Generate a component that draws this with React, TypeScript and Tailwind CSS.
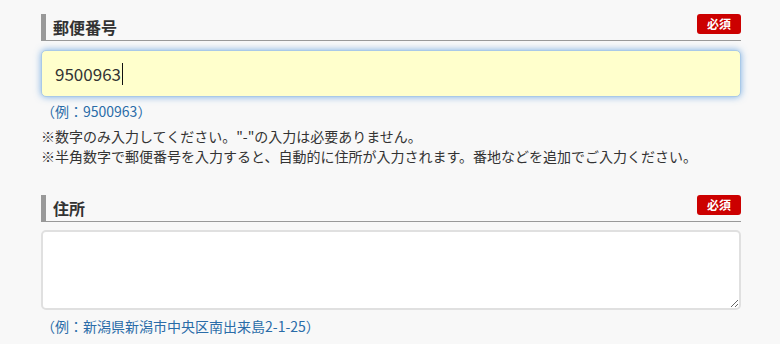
import React from 'react';

const font = { fontFamily: '"Noto Sans CJK JP", "Noto Sans", sans-serif' };

function FieldHeader({ label }: { label: string }) {
  return (
    <div className="flex h-[27px] items-center justify-between border-b border-l-[5px] border-[#999] pl-[7px]">
      <h3 className="text-[16px] font-bold leading-none text-[#333]">{label}</h3>
      <span className="flex h-[20px] w-[44px] items-center justify-center self-start rounded-[3px] bg-[#cc0000] text-[12px] font-bold leading-none text-white">
        必須
      </span>
    </div>
  );
}

export default function App() {
  return (
    <div className="min-h-screen bg-[#f8f8f8] pt-[14px]" style={font}>
      <div className="ml-[41px] w-[700px]">
        <FieldHeader label="郵便番号" />

        <div className="mt-[9px] flex h-[47px] items-center rounded-[5px] border border-[#a9c9e8] bg-[#ffffcc] pl-[13px] shadow-[0_0_7px_rgba(82,150,220,0.75)]">
          <span className="text-[17px] text-[#333]">9500963</span>
          <span className="ml-[1px] h-[22px] w-[1px] bg-[#111]" />
        </div>

        <p className="mt-[4px] text-[14px] leading-[20px] text-[#2a6ca8]">（例：9500963）</p>

        <div className="mt-[5px] text-[14px] leading-[20px] text-[#333]">
          <p>※数字のみ入力してください。"-"の入力は必要ありません。</p>
          <p>※半角数字で郵便番号を入力すると、自動的に住所が入力されます。番地などを追加でご入力ください。</p>
        </div>

        <div className="mt-[29px]">
          <FieldHeader label="住所" />
        </div>

        <textarea
          className="mt-[8px] block h-[80px] w-full resize-y rounded-[5px] border-2 border-[#e0e0e0] bg-white p-2 text-[16px] text-[#333] outline-none"
          defaultValue=""
        />

        <p className="mt-[6px] text-[14px] leading-[20px] text-[#2a6ca8]">（例：新潟県新潟市中央区南出来島2-1-25）</p>
      </div>
    </div>
  );
}
